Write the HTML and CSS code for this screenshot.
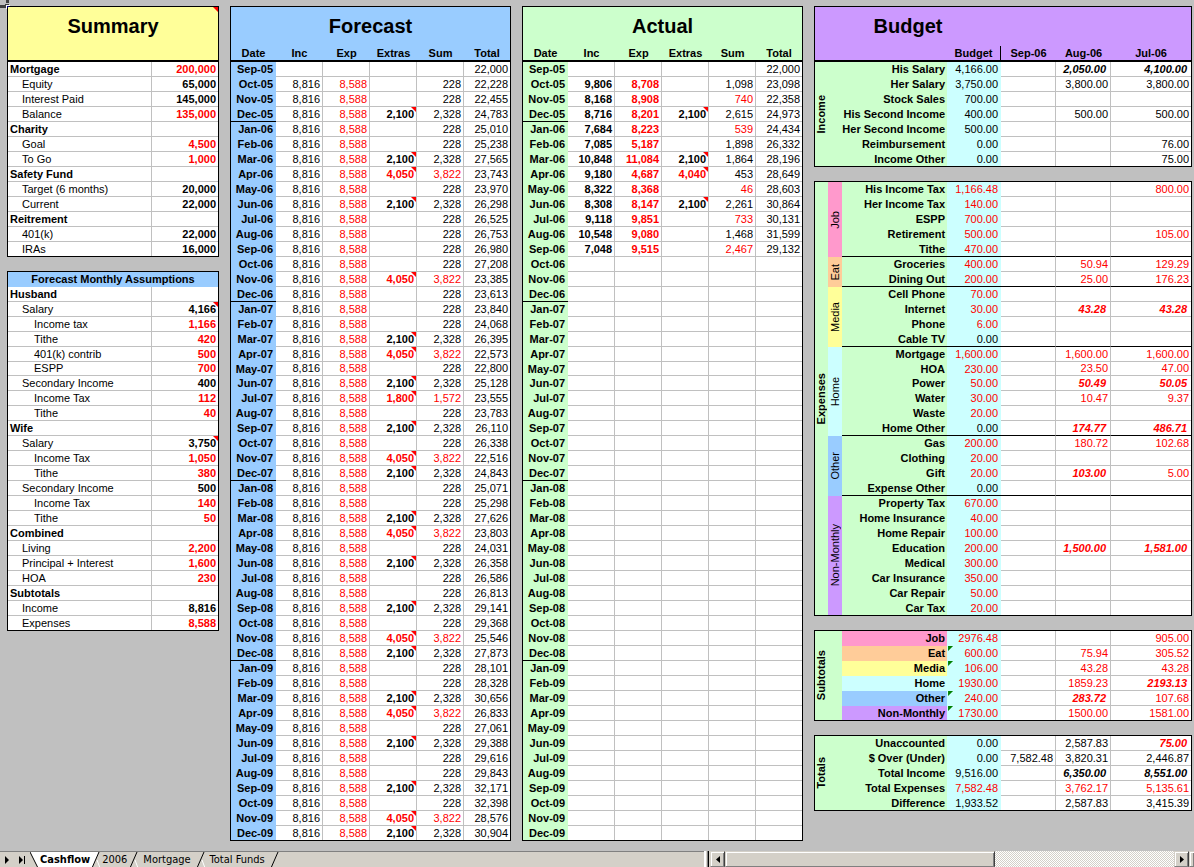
FILE: index.html
```html
<!DOCTYPE html>
<html lang="en">
<head>
<meta charset="utf-8">
<title>Cashflow</title>
<link rel="stylesheet" href="styles.css">
</head>
<body>
<main class="sheet">
  <svg class="cursor" width="10" height="10" viewBox="0 0 10 10" aria-hidden="true" shape-rendering="crispEdges">
    <path fill="#404040" d="M0 5h5v3H0zM6 0h3v3H6zM5 4h4v1H6v3H5z"/>
    <path fill="#fff" d="M6 5h4v1H7v3H6z"/>
    <path fill="#000080" d="M7 6h2v2H7z"/>
  </svg>

  <div class="column">
    <table class="grid yellow">
      <colgroup><col class="w-label"><col class="w-amount"></colgroup>
      <thead><tr class="banner"><th colspan="2" class="title ruled note">Summary</th></tr></thead>
      <tbody id="summary"></tbody>
    </table>
    <table class="grid blue">
      <colgroup><col class="w-label"><col class="w-amount"></colgroup>
      <thead><tr><th colspan="2">Forecast Monthly Assumptions</th></tr></thead>
      <tbody id="assumptions"></tbody>
    </table>
  </div>

  <div class="column">
    <table class="grid blue">
      <colgroup><col class="w-date"><col class="w-month"><col class="w-month"><col class="w-month"><col class="w-month"><col class="w-last"></colgroup>
      <thead>
        <tr class="title-row"><th colspan="6" class="title">Forecast</th></tr>
        <tr class="labels"><th>Date</th><th>Inc</th><th>Exp</th><th>Extras</th><th>Sum</th><th>Total</th></tr>
      </thead>
      <tbody id="forecast"></tbody>
    </table>
  </div>

  <div class="column">
    <table class="grid green">
      <colgroup><col class="w-date"><col class="w-month"><col class="w-month"><col class="w-month"><col class="w-month"><col class="w-last"></colgroup>
      <thead>
        <tr class="title-row"><th colspan="6" class="title">Actual</th></tr>
        <tr class="labels"><th>Date</th><th>Inc</th><th>Exp</th><th>Extras</th><th>Sum</th><th>Total</th></tr>
      </thead>
      <tbody id="actual"></tbody>
    </table>
  </div>

  <div class="column">
    <table class="grid purple">
      <colgroup><col class="w-side"><col class="w-group"><col class="w-name"><col class="w-budget"><col class="w-period"><col class="w-period"><col class="w-latest"></colgroup>
      <thead>
        <tr class="title-row"><th colspan="4" class="title">Budget</th><th colspan="3"></th></tr>
        <tr class="labels"><th colspan="3"></th><th class="tick">Budget</th><th>Sep-06</th><th>Aug-06</th><th>Jul-06</th></tr>
      </thead>
      <tbody id="income"></tbody>
    </table>
    <table class="grid green">
      <colgroup><col class="w-side"><col class="w-group"><col class="w-name"><col class="w-budget"><col class="w-period"><col class="w-period"><col class="w-latest"></colgroup>
      <tbody id="expenses"></tbody>
    </table>
    <table class="grid green">
      <colgroup><col class="w-side"><col class="w-group"><col class="w-name"><col class="w-budget"><col class="w-period"><col class="w-period"><col class="w-latest"></colgroup>
      <tbody id="subtotals"></tbody>
    </table>
    <table class="grid green">
      <colgroup><col class="w-side"><col class="w-group"><col class="w-name"><col class="w-budget"><col class="w-period"><col class="w-period"><col class="w-latest"></colgroup>
      <tbody id="totals"></tbody>
    </table>
  </div>
</main>

<footer class="bar">
  <nav class="tabs" aria-label="Sheets">
    <button class="step" aria-label="Next sheet"><svg width="7" height="8" viewBox="0 0 7 8"><path d="M1 0l4 4-4 4z"/></svg></button>
    <button class="step" aria-label="Last sheet"><svg width="7" height="8" viewBox="0 0 7 8"><path d="M0 0l4 4-4 4zM5 0h1v8H5z"/></svg></button>
    <svg class="edge" width="9" height="16" viewBox="0 0 9 16"><path fill="#fff" d="M0 0h9v16H8z"/><path class="ink" d="M0 0l8 16"/></svg>
    <button class="tab active">Cashflow</button>
    <svg class="edge" width="9" height="16" viewBox="0 0 9 16"><path fill="#fff" d="M0 0h8L1 16H0z"/><path class="ink" d="M8 0L1 16"/><path class="shine" d="M6 8l3 8"/></svg>
    <button class="tab narrow">2006</button>
    <svg class="edge" width="9" height="16" viewBox="0 0 9 16"><path class="ink" d="M8 0L1 16"/><path class="shine" d="M6 8l3 8"/></svg>
    <button class="tab">Mortgage</button>
    <svg class="edge" width="9" height="16" viewBox="0 0 9 16"><path class="ink" d="M8 0L1 16"/><path class="shine" d="M6 8l3 8"/></svg>
    <button class="tab">Total Funds</button>
    <svg class="edge" width="9" height="16" viewBox="0 0 9 16"><path class="ink" d="M8 0L1 16"/></svg>
  </nav>
  <div class="splitter"></div>
  <div class="scroller">
    <button class="arrow" aria-label="Scroll left"><svg width="4" height="7" viewBox="0 0 4 7"><path d="M4 0v7L0 3.500z"/></svg></button>
    <div class="track"><div class="thumb"></div></div>
    <button class="arrow" aria-label="Scroll right"><svg width="4" height="7" viewBox="0 0 4 7"><path d="M0 0v7l4-3.500z"/></svg></button>
  </div>
  <div class="corner"></div>
</footer>
<script src="app.js"></script>
</body>
</html>
```

FILE: styles.css
```css
* { box-sizing: border-box; }

body {
  margin: 0;
  min-height: 100vh;
  display: flex;
  flex-direction: column;
  background: #c0c0c0;
  color: #000;
  font: 11px/13px "Liberation Sans", Arial, sans-serif;
}

.sheet {
  position: relative;
  flex: 1;
  display: grid;
  grid-template-columns: 212fr 281fr 281fr 378fr;
  gap: 11px;
  align-items: start;
  padding: 6px 2px 10px 7px;
}

.cursor { position: absolute; left: 0; top: 0; }

.column { display: flex; flex-direction: column; gap: 14px; }

/* Tables */
.grid {
  width: 100%;
  table-layout: fixed;
  border: 1px solid #000;
  border-collapse: separate;
  border-spacing: 0;
  background: #fff;
}

.w-label { width: 144px; }
.w-amount { width: 66px; }
.w-date { width: 45px; }
.w-month { width: 47px; }
.w-last { width: 46px; }
.w-side { width: 13px; }
.w-group { width: 14px; }
.w-name { width: 105px; }
.w-budget { width: 54px; }
.w-period { width: 55px; }
.w-latest { width: 80px; }

tr { height: 15px; }
tr.short { height: 14px; }
tbody tr:last-child { height: 14px; }
tr.title-row { height: 39px; }
tr.labels { height: 16px; }
tr.banner { height: 55px; }

th, td {
  padding: 0;
  font-weight: normal;
  white-space: nowrap;
  vertical-align: middle;
}

thead th { font-weight: bold; text-align: center; }
tr.labels th { border-bottom: 2px solid #000; vertical-align: bottom; }
thead .title { padding-bottom: 2px; font-size: 20px; line-height: 24px; }
thead .banner .title { padding-bottom: 16px; border-bottom: 2px solid #000; }
.labels .tick { border-right: 1px solid #000; }

td {
  padding-right: 2px;
  text-align: right;
  border-right: 1px solid #c0c0c0;
  border-bottom: 1px solid #c0c0c0;
}
td:last-child { border-right: 0; }
tbody tr:last-child td { border-bottom: 0; }

.blue thead th, .blue .date { background: #99ccff; }
.green thead th, .green .date { background: #ccffcc; }
.yellow thead th { background: #ffff99; }
.purple thead th { background: #cc99ff; }

.label {
  padding-left: 2px;
  text-align: left;
  border-right: 1px solid #c0c0c0;
  border-bottom: 1px solid #c0c0c0;
}
tbody tr:last-child .label { border-bottom: 0; }
.label.head { font-weight: bold; }
.label.in1 { padding-left: 14px; }
.label.in2 { padding-left: 26px; }

.date { padding-right: 3px; font-weight: bold; text-align: right; }
.date.year-end { border-bottom: 1px solid #000; }

.name { padding-right: 2px; font-weight: bold; text-align: right; background: #ccffcc; }
td.budget { padding-right: 3px; border: 0; background: #ccffff; }
.group-end .name, .group-end td, .group-end td.budget { border-bottom: 1px solid #000; }

.side, .group, .filler { background: #ccffcc; text-align: center; vertical-align: middle; }
.side { font-weight: bold; }
.side span, .group span { display: inline-block; vertical-align: middle; writing-mode: vertical-rl; transform: rotate(180deg); }

.pink { background: #ff99cc; }
.orange { background: #ffcc99; }
.lemon { background: #ffff99; }
.aqua { background: #ccffff; }
.sky { background: #99ccff; }
.violet { background: #cc99ff; }

.red { color: #f00; }
.bold { font-weight: bold; }
.strong { padding-right: 4px; font-weight: bold; font-style: italic; }

.note { position: relative; }
.note::after, .flag::before {
  content: "";
  position: absolute;
  top: 0;
  width: 5px;
  height: 5px;
}
.note::after { right: 0; background: #f00; clip-path: polygon(0 0, 100% 0, 100% 100%); }
.flag { position: relative; }
.flag::before { left: 1px; background: #008000; clip-path: polygon(0 0, 100% 0, 0 100%); }

/* Sheet tabs and scroll bar */
.bar {
  display: flex;
  height: 16px;
  background: #d4d0c8;
}
.bar button {
  margin: 0;
  padding: 0;
  border: 0;
  background: none;
  color: #000;
  font: 11px/14px "DejaVu Sans Condensed", "DejaVu Sans", Tahoma, sans-serif;
  white-space: nowrap;
}
.tabs { flex: 705; display: flex; border-top: 1px solid #808080; }
.bar .step { width: 15px; display: flex; align-items: center; justify-content: center; }
.bar .tab { flex: none; padding: 0 5px; text-align: center; }
.bar .tab.narrow { padding: 0 2px; }
.bar .tab.active { padding: 0 1px; background: #fff; font-weight: bold; }
.edge { flex: none; }
.edge .ink { fill: none; stroke: #000; stroke-width: 1; }
.edge .shine { fill: none; stroke: #fff; stroke-width: 1; }
.splitter { width: 5px; border-left: 1px solid #fff; border-right: 1px solid #000; box-shadow: inset 1px 0 #fff, inset -1px 0 #808080; }
.scroller { flex: 479; display: flex; padding-left: 1px; }
.bar .arrow, .thumb, .corner {
  background: #d4d0c8;
  border: 1px solid;
  border-color: #d4d0c8 #404040 #808080 #d4d0c8;
  box-shadow: inset 1px 1px #fff, inset -1px 0 #808080;
}
.bar .arrow { width: 15px; display: flex; align-items: center; justify-content: center; }
.track {
  flex: 1;
  display: flex;
  background: repeating-conic-gradient(#fff 0 25%, #d4d0c8 0 50%) 0 0 / 2px 2px;
}
.thumb { width: 60%; }
.corner { width: 5px; border-right: 0; }
```

FILE: app.js
```js
// Cell text may carry a style prefix: r = red, b = bold, i = bold italic, n = note marker, f = flag marker.
const STYLES = { r: "red", b: "bold", i: "strong", n: "note", f: "flag" };

function cell(text, base) {
  const [, codes, value] = /^(?:([rbinf]+):)?(.*)$/.exec(text);
  const names = [base, ...(codes || "").split("").map((c) => STYLES[c])].filter(Boolean);
  return `<td${names.length ? ` class="${names.join(" ")}"` : ""}>${value}</td>`;
}

function fill(id, rows) {
  document.getElementById(id).innerHTML = rows.join("");
}

// Two-column lists: indent level, label, amount
function list(id, data, shortRow) {
  const levels = ["head", "in1", "in2"];
  fill(id, data.map(([level, label, amount], i) =>
    `<tr${i === shortRow ? ' class="short"' : ""}><th scope="row" class="label ${levels[level]}">${label}</th>${cell(amount)}</tr>`));
}

list("summary", [
  [0, "Mortgage", "rb:200,000"], [1, "Equity", "b:65,000"], [1, "Interest Paid", "b:145,000"], [1, "Balance", "rb:135,000"],
  [0, "Charity", ""], [1, "Goal", "rb:4,500"], [1, "To Go", "rb:1,000"],
  [0, "Safety Fund", ""], [1, "Target (6 months)", "b:20,000"], [1, "Current", "b:22,000"],
  [0, "Reitrement", ""], [1, "401(k)", "b:22,000"], [1, "IRAs", "b:16,000"],
]);

list("assumptions", [
  [0, "Husband", ""], [1, "Salary", "bn:4,166"], [2, "Income tax", "rb:1,166"], [2, "Tithe", "rb:420"],
  [2, "401(k) contrib", "rb:500"], [2, "ESPP", "rb:700"], [1, "Secondary Income", "b:400"],
  [2, "Income Tax", "rb:112"], [2, "Tithe", "rb:40"],
  [0, "Wife", ""], [1, "Salary", "bn:3,750"], [2, "Income Tax", "rb:1,050"], [2, "Tithe", "rb:380"],
  [1, "Secondary Income", "b:500"], [2, "Income Tax", "rb:140"], [2, "Tithe", "rb:50"],
  [0, "Combined", ""], [1, "Living", "rb:2,200"], [1, "Principal + Interest", "rb:1,600"], [1, "HOA", "rb:230"],
  [0, "Subtotals", ""], [1, "Income", "b:8,816"], [1, "Expenses", "rb:8,588"],
], 5);

// Monthly tables run from Sep-05 to Dec-09
const MONTHS = "Jan Feb Mar Apr May Jun Jul Aug Sep Oct Nov Dec".split(" ");
const dates = [];
for (let m = 8; m < 60; m++) dates.push(`${MONTHS[m % 12]}-0${5 + Math.floor(m / 12)}`);

function monthly(id, values) {
  fill(id, dates.map((date, i) => {
    const yearEnd = date.startsWith("Dec") && i < dates.length - 1;
    const cells = (values(date, i) || ["", "", "", "", ""]).map((v) => cell(v)).join("");
    return `<tr${date === "May-07" ? ' class="short"' : ""}><th scope="row" class="date${yearEnd ? " year-end" : ""}">${date}</th>${cells}</tr>`;
  }));
}

const balances = `22,000 22,228 22,455 24,783 25,010 25,238 27,565 23,743 23,970 26,298 26,525 26,753 26,980 27,208 23,385 23,613
23,840 24,068 26,395 22,573 22,800 25,128 23,555 23,783 26,110 26,338 22,516 24,843
25,071 25,298 27,626 23,803 24,031 26,358 26,586 26,813 29,141 29,368 25,546 27,873
28,101 28,328 30,656 26,833 27,061 29,388 29,616 29,843 32,171 32,398 28,576 30,904`.split(/\s+/);

const bonusDates = "Dec-05 Mar-06 Jun-06 Mar-07 Jun-07 Sep-07 Dec-07 Mar-08 Jun-08 Sep-08 Dec-08 Mar-09 Jun-09 Sep-09 Dec-09".split(" ");
const costDates = "Apr-06 Nov-06 Apr-07 Nov-07 Apr-08 Nov-08 Apr-09 Nov-09".split(" ");

monthly("forecast", (date, i) => {
  if (i === 0) return ["", "", "", "", balances[0]];
  let extra = "", sum = "228";
  if (bonusDates.includes(date)) { extra = "bn:2,100"; sum = "2,328"; }
  if (costDates.includes(date)) { extra = "rbn:4,050"; sum = "r:3,822"; }
  if (date === "Jul-07") { extra = "rbn:1,800"; sum = "r:1,572"; }
  return ["8,816", "r:8,588", extra, sum, balances[i]];
});

const actual = [
  ["", "", "", "", "22,000"],
  ["b:9,806", "rb:8,708", "", "1,098", "23,098"],
  ["b:8,168", "rb:8,908", "", "r:740", "22,358"],
  ["b:8,716", "rb:8,201", "bn:2,100", "2,615", "24,973"],
  ["b:7,684", "rb:8,223", "", "r:539", "24,434"],
  ["b:7,085", "rb:5,187", "", "1,898", "26,332"],
  ["b:10,848", "rb:11,084", "bn:2,100", "1,864", "28,196"],
  ["b:9,180", "rb:4,687", "rbn:4,040", "453", "28,649"],
  ["b:8,322", "rb:8,368", "", "r:46", "28,603"],
  ["b:8,308", "rb:8,147", "bn:2,100", "2,261", "30,864"],
  ["b:9,118", "rb:9,851", "", "r:733", "30,131"],
  ["b:10,548", "rb:9,080", "", "1,468", "31,599"],
  ["b:7,048", "rb:9,515", "", "r:2,467", "29,132"],
];
monthly("actual", (date, i) => actual[i]);

// Budget blocks: name, budget, Sep, Aug, Jul
function amounts([, budget, ...rest]) {
  return cell(budget, "budget") + rest.map((v) => cell(v)).join("");
}
function side(text, count) {
  return `<th scope="rowgroup" class="side" rowspan="${count}"><span>${text}</span></th>`;
}
function block(id, title, data) {
  fill(id, data.map((row, i) =>
    `<tr>${i ? "" : side(title, data.length)}<th scope="row" class="name" colspan="2">${row[0]}</th>${amounts(row)}</tr>`));
}

block("income", "Income", [
  ["His Salary", "4,166.00", "", "i:2,050.00", "i:4,100.00"],
  ["Her Salary", "3,750.00", "", "3,800.00", "3,800.00"],
  ["Stock Sales", "700.00", "", "", ""],
  ["His Second Income", "400.00", "", "500.00", "500.00"],
  ["Her Second Income", "500.00", "", "", ""],
  ["Reimbursement", "0.00", "", "", "76.00"],
  ["Income Other", "0.00", "", "", "75.00"],
]);

const groups = [
  ["Job", "pink", [
    ["His Income Tax", "r:1,166.48", "", "", "r:800.00"],
    ["Her Income Tax", "r:140.00", "", "", ""],
    ["ESPP", "r:700.00", "", "", ""],
    ["Retirement", "r:500.00", "", "", "r:105.00"],
    ["Tithe", "r:470.00", "", "", ""]]],
  ["Eat", "orange", [
    ["Groceries", "r:400.00", "", "r:50.94", "r:129.29"],
    ["Dining Out", "r:200.00", "", "r:25.00", "r:176.23"]]],
  ["Media", "lemon", [
    ["Cell Phone", "r:70.00", "", "", ""],
    ["Internet", "r:30.00", "", "ri:43.28", "ri:43.28"],
    ["Phone", "r:6.00", "", "", ""],
    ["Cable TV", "0.00", "", "", ""]]],
  ["Home", "aqua", [
    ["Mortgage", "r:1,600.00", "", "r:1,600.00", "r:1,600.00"],
    ["HOA", "r:230.00", "", "r:23.50", "r:47.00"],
    ["Power", "r:50.00", "", "ri:50.49", "ri:50.05"],
    ["Water", "r:30.00", "", "r:10.47", "r:9.37"],
    ["Waste", "r:20.00", "", "", ""],
    ["Home Other", "0.00", "", "ri:174.77", "ri:486.71"]]],
  ["Other", "sky", [
    ["Gas", "r:200.00", "", "r:180.72", "r:102.68"],
    ["Clothing", "r:20.00", "", "", ""],
    ["Gift", "r:20.00", "", "ri:103.00", "r:5.00"],
    ["Expense Other", "0.00", "", "", ""]]],
  ["Non-Monthly", "violet", [
    ["Property Tax", "r:670.00", "", "", ""],
    ["Home Insurance", "r:40.00", "", "", ""],
    ["Home Repair", "r:100.00", "", "", ""],
    ["Education", "r:200.00", "", "ri:1,500.00", "ri:1,581.00"],
    ["Medical", "r:300.00", "", "", ""],
    ["Car Insurance", "r:350.00", "", "", ""],
    ["Car Repair", "r:50.00", "", "", ""],
    ["Car Tax", "r:20.00", "", "", ""]]],
];
const expenseRows = [];
groups.forEach(([title, colour, rows], g) => rows.forEach((row, i) => {
  const names = [];
  if (row[0] === "HOA") names.push("short");
  if (i === rows.length - 1 && g < groups.length - 1) names.push("group-end");
  const lead = g === 0 && i === 0 ? side("Expenses", 29) : "";
  const group = i ? "" : `<th scope="rowgroup" class="group ${colour}" rowspan="${rows.length}"><span>${title}</span></th>`;
  expenseRows.push(`<tr class="${names.join(" ")}">${lead}${group}<th scope="row" class="name">${row[0]}</th>${amounts(row)}</tr>`);
}));
fill("expenses", expenseRows);

const subtotals = [
  ["Job", "r:2976.48", "", "", "r:905.00"],
  ["Eat", "rf:600.00", "", "r:75.94", "r:305.52"],
  ["Media", "rf:106.00", "", "r:43.28", "r:43.28"],
  ["Home", "r:1930.00", "", "r:1859.23", "ri:2193.13"],
  ["Other", "rf:240.00", "", "ri:283.72", "r:107.68"],
  ["Non-Monthly", "rf:1730.00", "", "r:1500.00", "r:1581.00"],
];
fill("subtotals", subtotals.map((row, i) =>
  `<tr>${i ? "" : side("Subtotals", 6) + '<th class="filler" rowspan="6"></th>'}<th scope="row" class="name ${groups[i][1]}">${row[0]}</th>${amounts(row)}</tr>`));

block("totals", "Totals", [
  ["Unaccounted", "0.00", "", "2,587.83", "ri:75.00"],
  ["$ Over (Under)", "0.00", "7,582.48", "3,820.31", "2,446.87"],
  ["Total Income", "9,516.00", "", "i:6,350.00", "i:8,551.00"],
  ["Total Expenses", "r:7,582.48", "", "r:3,762.17", "r:5,135.61"],
  ["Difference", "1,933.52", "", "2,587.83", "3,415.39"],
]);
```
